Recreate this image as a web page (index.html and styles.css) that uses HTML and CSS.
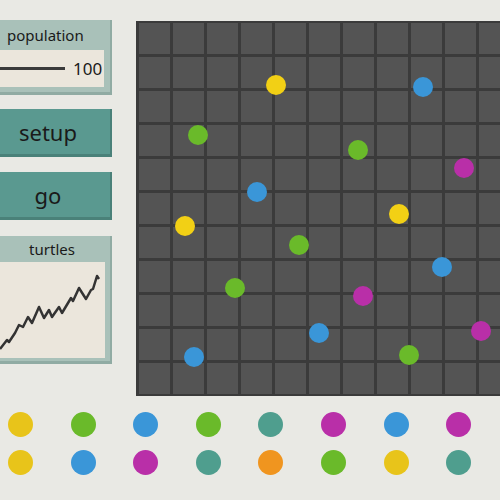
FILE: index.html
```html
<!DOCTYPE html>
<html lang="en">
<head>
    <meta charset="UTF-8">
    <title>Turtles Model</title>
    <link rel="stylesheet" href="styles.css">
</head>
<body>
<!--Interface-->
<div class="main">
    <div class="controls">
        <!--Slider-->
        <div class="panel slider">
            <div class="label label-left">population</div>
            <div class="inner slider-body">
                <span class="track"></span>
                <span class="value">100</span>
            </div>
        </div>
        <!--Buttons-->
        <div class="btnFormat">setup</div>
        <div class="btnFormat">go</div>
        <!--Plot-->
        <div class="panel plot">
            <div class="label plot-label">turtles</div>
            <div class="inner plot-body">
                <svg width="105" height="96" viewBox="0 0 105 96">
                    <polyline fill="none" stroke="#333" stroke-width="2.5" stroke-linejoin="round"
                        points="0,87 7,78 9,80 15,71 19,63 23,65 28,55 32,61 39,45 44,56 49,48 52,55 59,45 62,51 71,36 73,39 79,26 86,37 91,28 93,27 97,14 99,17"/>
                </svg>
            </div>
        </div>
    </div>
    <!--World-->
    <div class="world">
        <div class="cells" id="cells"></div>
        <span class="turtle yellow" style="left:130px;top:54px"></span>
        <span class="turtle blue" style="left:277px;top:56px"></span>
        <span class="turtle green" style="left:52px;top:104px"></span>
        <span class="turtle green" style="left:212px;top:119px"></span>
        <span class="turtle magenta" style="left:318px;top:137px"></span>
        <span class="turtle blue" style="left:111px;top:161px"></span>
        <span class="turtle yellow" style="left:39px;top:195px"></span>
        <span class="turtle yellow" style="left:253px;top:183px"></span>
        <span class="turtle green" style="left:153px;top:214px"></span>
        <span class="turtle blue" style="left:296px;top:236px"></span>
        <span class="turtle green" style="left:89px;top:257px"></span>
        <span class="turtle magenta" style="left:217px;top:265px"></span>
        <span class="turtle blue" style="left:173px;top:302px"></span>
        <span class="turtle magenta" style="left:335px;top:300px"></span>
        <span class="turtle blue" style="left:48px;top:326px"></span>
        <span class="turtle green" style="left:263px;top:324px"></span>
    </div>
</div>
<!--Palette-->
<div class="palettes">
    <div class="palette">
        <span class="swatch yellow"></span>
        <span class="swatch green"></span>
        <span class="swatch blue"></span>
        <span class="swatch green"></span>
        <span class="swatch teal"></span>
        <span class="swatch magenta"></span>
        <span class="swatch blue"></span>
        <span class="swatch magenta"></span>
    </div>
    <div class="palette">
        <span class="swatch yellow"></span>
        <span class="swatch blue"></span>
        <span class="swatch magenta"></span>
        <span class="swatch teal"></span>
        <span class="swatch orange"></span>
        <span class="swatch green"></span>
        <span class="swatch yellow"></span>
        <span class="swatch teal"></span>
    </div>
</div>

<script>
    //fill the world with patches
    const cells = document.getElementById("cells");
    for (let i = 0; i < 121; i++) {
        const cell = document.createElement("div");
        cell.className = "cell";
        cells.appendChild(cell);
    }
</script>
</body>
</html>
```

FILE: styles.css
```css
html, body {
    overflow: hidden;
}
body {
    background: #e9e9e4;
    font-family: "Noto Sans", sans-serif;
    color: #1a1a1a;
    margin: 0;
    width: 500px;
    height: 500px;
}
.main {
    display: flex;
    gap: 24px;
    padding-top: 20px;
    height: 392px;
}
.controls {
    display: flex;
    flex-direction: column;
    width: 112px;
    flex-shrink: 0;
}
.panel {
    background: #a9c1b9;
    box-shadow: inset -2px -3px 0 #90aba3;
    padding-bottom: 6px;
}
.label {
    font-size: 15px;
    text-align: center;
    height: 30px;
    line-height: 30px;
    padding-right: 8px;
}
.label-left {
    text-align: left;
    padding-left: 7px;
}
.inner {
    background: #ebe6dc;
    width: 104px;
}
.slider {
    height: 69px;
}
.slider-body {
    display: flex;
    align-items: center;
    height: 37px;
}
.track {
    display: inline-block;
    width: 65px;
    height: 3px;
    background: #3a3a3a;
}
.value {
    font-size: 17px;
    margin-left: 8px;
}
.btnFormat {
    background: #5a9990;
    box-shadow: inset -2px -3px 0 #4a8179;
    font-size: 22px;
    height: 48px;
    line-height: 46px;
    text-align: center;
    padding-right: 16px;
    margin-top: 14px;
}
.btnFormat + .btnFormat {
    margin-top: 15px;
}
.plot {
    margin-top: 16px;
    height: 122px;
}
.plot-label {
    height: 26px;
    line-height: 26px;
}
.plot-body {
    width: 105px;
    height: 96px;
}
.plot-body svg {
    display: block;
}
.world {
    position: relative;
    flex-shrink: 0;
    margin-top: 1px;
}
.cells {
    display: grid;
    grid-template-columns: repeat(11, 31px);
    grid-template-rows: repeat(11, 31px);
    gap: 3px;
    padding: 2px 3px;
    background: #3b3b3b;
}
.cell {
    background: #545454;
}
.turtle {
    position: absolute;
    width: 20px;
    height: 20px;
    border-radius: 50%;
}
.palettes {
    display: flex;
    flex-direction: column;
    gap: 13px;
}
.palette {
    display: flex;
    gap: 37.6px;
    padding-left: 8px;
}
.swatch {
    display: inline-block;
    width: 25px;
    height: 25px;
    border-radius: 50%;
}
.yellow { background: #e8c41a; }
.turtle.yellow { background: #f2d015; }
.green { background: #6aba2a; }
.blue { background: #3a96d8; }
.teal { background: #4f9e8e; }
.magenta { background: #b92fa8; }
.orange { background: #f0951f; }
```
